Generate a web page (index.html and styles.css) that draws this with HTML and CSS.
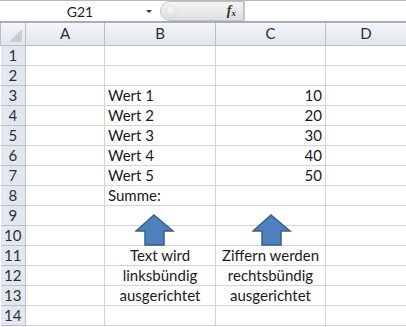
FILE: index.html
```html
<!DOCTYPE html>
<html lang="de">
<head>
  <meta charset="UTF-8">
  <title>Tabelle</title>
  <link rel="stylesheet" href="styles.css">
</head>
<body>

  <div class="formula-bar">
    <div class="name-box">
      <span class="cell-ref">G21</span>
      <span class="drop-arrow"></span>
    </div>
    <div class="fx-pill">
      <span class="knob"></span>
      <span class="fx">f<sub>x</sub></span>
    </div>
    <div class="formula-input"></div>
  </div>

  <div class="sheet">
    <table class="grid">
      <colgroup>
        <col class="col-head">
        <col class="col-a">
        <col class="col-b">
        <col class="col-c">
        <col class="col-d">
      </colgroup>
      <thead>
        <tr>
          <th class="corner"><span class="corner-tri"></span></th>
          <th>A</th>
          <th>B</th>
          <th>C</th>
          <th>D</th>
        </tr>
      </thead>
      <tbody>
        <tr><th>1</th><td></td><td></td><td></td><td></td></tr>
        <tr><th>2</th><td></td><td></td><td></td><td></td></tr>
        <tr><th>3</th><td></td><td>Wert 1</td><td class="num">10</td><td></td></tr>
        <tr><th>4</th><td></td><td>Wert 2</td><td class="num">20</td><td></td></tr>
        <tr><th>5</th><td></td><td>Wert 3</td><td class="num">30</td><td></td></tr>
        <tr><th>6</th><td></td><td>Wert 4</td><td class="num">40</td><td></td></tr>
        <tr><th>7</th><td></td><td>Wert 5</td><td class="num">50</td><td></td></tr>
        <tr><th>8</th><td></td><td>Summe:</td><td></td><td></td></tr>
        <tr><th>9</th><td></td><td></td><td></td><td></td></tr>
        <tr><th>10</th><td></td><td></td><td></td><td></td></tr>
        <tr><th>11</th><td></td><td class="note">Text wird</td><td class="note">Ziffern werden</td><td></td></tr>
        <tr><th>12</th><td></td><td class="note">linksbündig</td><td class="note">rechtsbündig</td><td></td></tr>
        <tr><th>13</th><td></td><td class="note">ausgerichtet</td><td class="note">ausgerichtet</td><td></td></tr>
        <tr><th>14</th><td></td><td></td><td></td><td></td></tr>
      </tbody>
    </table>

    <!-- the two block arrows float over the grid -->
    <svg class="arrow arrow-left" width="40" height="32" viewBox="0 0 40 32">
      <path d="M19 1 L38 17 L29 17 L29 31 L10 31 L10 17 L1 17 Z" />
    </svg>
    <svg class="arrow arrow-right" width="40" height="32" viewBox="0 0 40 32">
      <path d="M19 1 L38 17 L29 17 L29 31 L10 31 L10 17 L1 17 Z" />
    </svg>
  </div>

</body>
</html>
```

FILE: styles.css
```css
* {
  margin: 0;
  padding: 0;
  box-sizing: border-box;
}

body {
  font-family: Lato, 'Liberation Sans', sans-serif;
  background: #fff;
  color: #000;
  width: 406px;
  height: 327px;
  overflow: hidden;
}

/* formula bar */

.formula-bar {
  display: flex;
  height: 23px;
  border-top: 1px solid #b8b8b8;
  border-bottom: 2px solid #a9adb3;
  background: #fff;
}

.name-box {
  width: 160px;
  position: relative;
  display: flex;
  align-items: center;
  justify-content: center;
  padding-right: 20px;
}

.cell-ref {
  font-size: 14px;
  color: #1e1e1e;
  margin-left: 20px;
}

.drop-arrow {
  position: absolute;
  right: 8px;
  top: 9px;
  width: 0;
  height: 0;
  border-left: 3px solid transparent;
  border-right: 3px solid transparent;
  border-top: 3px solid #333;
}

.fx-pill {
  width: 84px;
  position: relative;
  background: linear-gradient(#f4f4f4, #dedfe1);
  border: 1px solid #bfc3c8;
  border-radius: 11px 0 0 11px;
  margin-top: 0;
}

.knob {
  position: absolute;
  left: 4px;
  top: 3px;
  width: 12px;
  height: 14px;
  border-radius: 50%;
  background: radial-gradient(circle at 45% 35%, #f8f8f8, #cfd1d4);
}

.fx {
  position: absolute;
  right: 7px;
  top: 1px;
  font-family: 'Liberation Serif', serif;
  font-style: italic;
  font-weight: bold;
  font-size: 14px;
  color: #333;
}

.fx sub {
  font-size: 9px;
  vertical-align: -1px;
}

.formula-input {
  flex: 1;
  border-left: 1px solid #c8ccd1;
}

/* sheet grid */

.sheet {
  position: relative;
}

.grid {
  border-collapse: collapse;
  table-layout: fixed;
  width: 406px;
  font-size: 15px;
}

.col-head { width: 25px; }
.col-a { width: 79px; }
.col-b { width: 111px; }
.col-c { width: 110px; }
.col-d { width: 81px; }

.grid th,
.grid td {
  height: 20px;
  line-height: 19px;
  border: 1px solid #d4d4d4;
  white-space: nowrap;
  overflow: hidden;
}

.grid thead th {
  height: 22px;
  font-weight: normal;
  font-size: 15px;
  color: #27313d;
  background: linear-gradient(#f3f5f8, #e2e6ec);
  border-color: #b9c0c9;
  border-top: none;
}

.grid tbody th {
  font-weight: normal;
  font-size: 15px;
  color: #27313d;
  background: #e4e8ee;
  border-color: #b9c0c9;
  text-align: center;
  border-left: none;
}

.corner {
  position: relative;
}

.corner-tri {
  position: absolute;
  right: 3px;
  bottom: 3px;
  width: 0;
  height: 0;
  border-left: 13px solid transparent;
  border-bottom: 13px solid #c9ccd1;
}

.grid td {
  padding: 0 3px;
  color: #1a1a1a;
}

.grid td.num {
  text-align: right;
}

.grid td.note {
  text-align: center;
}

/* block arrows */

.arrow {
  position: absolute;
  top: 191px;
}

.arrow path {
  fill: #4f81bd;
  stroke: #385d8a;
  stroke-width: 1.5;
}

.arrow-left { left: 135px; }
.arrow-right { left: 252px; }
```
